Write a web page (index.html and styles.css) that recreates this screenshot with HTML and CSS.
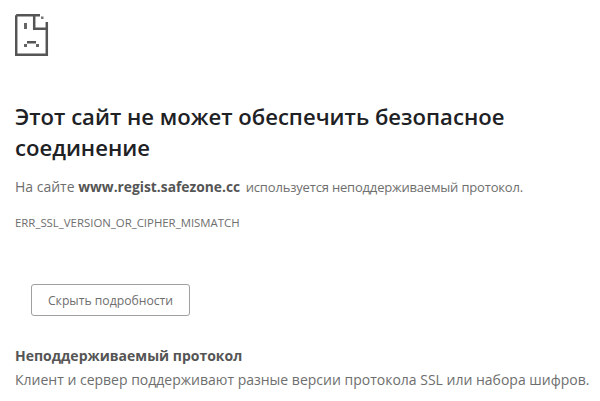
FILE: index.html
```html
<!DOCTYPE html>
<html lang="ru">
<head>
    <meta charset="UTF-8">
    <meta name="viewport" content="width=device-width, initial-scale=1.0">
    <title>Ошибка</title>
    <link rel="stylesheet" href="styles.css">
</head>
<body>
<div class="container">
    <svg class="error-icon" width="34" height="42" viewBox="0 0 34 42">
        <path d="M1.2 1.2H25M31.8 8V40.8H1.2V1.2" fill="none" stroke="#555" stroke-width="2.5"/>
        <path d="M19.2 1.2V14.8H31.8" fill="none" stroke="#555" stroke-width="2.5"/>
        <rect x="26" y="2.5" width="2.5" height="2.5" fill="#777"/>
        <rect x="9" y="9" width="3" height="6" fill="#666"/>
        <rect x="12" y="27" width="9" height="2.5" fill="#555"/>
        <rect x="9" y="30" width="3" height="3" fill="#666"/>
        <rect x="21" y="30" width="3" height="3" fill="#666"/>
    </svg>
    <h1 class="title">Этот сайт не может обеспечить безопасное соединение</h1>
    <p class="message">На сайте <b>www.regist.safezone.cc</b> <span class="message-end">используется неподдерживаемый протокол.</span></p>
    <p class="error-code">ERR_SSL_VERSION_OR_CIPHER_MISMATCH</p>
    <button class="details-button">Скрыть подробности</button>
    <h2 class="details-title">Неподдерживаемый протокол</h2>
    <p class="details-text">Клиент и сервер поддерживают разные версии протокола SSL или набора шифров.</p>
</div>
</body>
</html>
```
FILE: styles.css
```css
body {
    margin: 0;
    background-color: white;
    color: #6e6e6e;
    font-family: "Open Sans", Arial, sans-serif;
    overflow: hidden;
}

.container {
    display: flex;
    flex-direction: column;
    align-items: flex-start;
    padding: 14px 0 0 15px;
}

.error-icon {
    display: block;
}

.title {
    margin: 45px 0 0;
    width: 520px;
    font-size: 22.1px;
    font-weight: 600;
    line-height: 31px;
    color: #202124;
}

.message {
    margin: 14px 0 0;
    font-size: 14px;
    line-height: 20px;
    white-space: nowrap;
}

.message b {
    color: #555;
    font-size: 13.8px;
}

.message-end {
    margin-left: 2px;
    font-size: 13px;
    letter-spacing: -0.18px;
}

.error-code {
    margin: 19px 0 0;
    font-size: 11.4px;
    line-height: 14px;
}

.details-button {
    margin: 54px 0 0 16px;
    width: 159px;
    height: 32px;
    background-color: white;
    border: 1px solid #a0a0a0;
    border-radius: 3px;
    color: #6e6e6e;
    font-family: inherit;
    font-size: 12.2px;
}

.details-title {
    margin: 31px 0 0;
    font-size: 14px;
    font-weight: 700;
    line-height: 18px;
    color: #555;
}

.details-text {
    margin: 5px 0 0;
    font-size: 14px;
    line-height: 20px;
    white-space: nowrap;
}
```
